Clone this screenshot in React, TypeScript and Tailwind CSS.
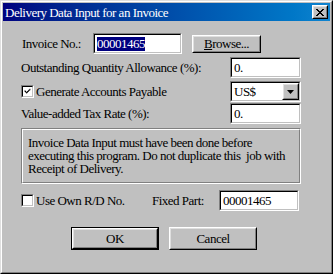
import React from "react";

const font = { fontFamily: '"Liberation Serif", "Times New Roman", serif' };

function Sunken({ className = "", children }: { className?: string; children?: React.ReactNode }) {
  return (
    <div className={`border border-t-[#808080] border-l-[#808080] border-b-white border-r-white ${className}`}>
      <div className="w-full h-full border border-t-black border-l-black border-b-[#c0c0c0] border-r-[#c0c0c0] bg-white flex items-center">
        {children}
      </div>
    </div>
  );
}

function Raised({ className = "", children }: { className?: string; children?: React.ReactNode }) {
  return (
    <div className={`border border-t-white border-l-white border-b-black border-r-black ${className}`}>
      <div className="w-full h-full border border-t-[#dfdfdf] border-l-[#dfdfdf] border-b-[#808080] border-r-[#808080] bg-[#c0c0c0] flex items-center justify-center">
        {children}
      </div>
    </div>
  );
}

function Check({ checked }: { checked?: boolean }) {
  return (
    <Sunken className="w-[13px] h-[13px] shrink-0">
      {checked && (
        <svg width="11" height="11" viewBox="0 0 11 11" className="block">
          <path d="M2 4h1v1h1v1h1V5h1V4h1V3h1V2h1v2H8v1H7v1H6v1H5v1H4V7H3V6H2z" fill="black" />
        </svg>
      )}
    </Sunken>
  );
}

export default function App() {
  return (
    <div className="w-[333px] h-[274px] text-[13px] tracking-[-0.5px] text-black" style={font}>
      <div className="w-full h-full border border-t-[#dfdfdf] border-l-[#dfdfdf] border-b-black border-r-black bg-[#c0c0c0]">
        <div className="w-full h-full border border-t-white border-l-white border-b-[#808080] border-r-[#808080] p-px flex flex-col">
          {/* Title bar */}
          <div className="h-[18px] shrink-0 bg-gradient-to-r from-[#000080] to-[#1084d0] flex items-center pl-[2px] pr-[2px]">
            <span className="text-white text-[13px] leading-none flex-1">Delivery Data Input for an Invoice</span>
            <Raised className="w-[16px] h-[14px]">
              <svg width="8" height="7" viewBox="0 0 8 7" className="block">
                <path d="M0 0h2v1h1v1h2V1h1V0h2v1H7v1H6v1H5v1h1v1h1v1h1v1H6V6H5V5H3v1H2v1H0V6h1V5h1V4h1V3H2V2H1V1H0z" fill="black" />
              </svg>
            </Raised>
          </div>

          {/* Content */}
          <div className="flex flex-col pl-[18px] w-[298px]">
            {/* Row 1 */}
            <div className="mt-[12px] h-[21px] flex items-center">
              <span className="w-[72px] pl-[1px]">Invoice No.:</span>
              <Sunken className="w-[89px] h-[21px]">
                <span className="ml-[2px] bg-[#000080] text-white leading-[14px] px-0">00001465</span>
              </Sunken>
              <Raised className="ml-[10px] w-[69px] h-[18px]">
                <span className="leading-none">
                  <span className="underline">B</span>rowse...
                </span>
              </Raised>
            </div>

            {/* Row 2 */}
            <div className="mt-[3px] h-[21px] flex items-center justify-between">
              <span>Outstanding Quantity Allowance (%):</span>
              <Sunken className="w-[71px] h-[21px]">
                <span className="ml-[2px]">0.</span>
              </Sunken>
            </div>

            {/* Row 3 */}
            <div className="mt-[3px] h-[21px] flex items-center justify-between">
              <div className="flex items-center">
                <Check checked />
                <span className="ml-[2px]">Generate Accounts Payable</span>
              </div>
              <Sunken className="w-[71px] h-[21px]">
                <span className="ml-[2px] flex-1">US$</span>
                <Raised className="w-[17px] h-[17px] mr-0">
                  <svg width="7" height="4" viewBox="0 0 7 4" className="block">
                    <path d="M0 0h7L3.5 4z" fill="black" />
                  </svg>
                </Raised>
              </Sunken>
            </div>

            {/* Row 4 */}
            <div className="mt-[1px] h-[21px] flex items-center justify-between">
              <span>Value-added Tax Rate (%):</span>
              <Sunken className="w-[71px] h-[21px]">
                <span className="ml-[2px]">0.</span>
              </Sunken>
            </div>

            {/* Info box */}
            <div className="mt-[4px] h-[56px] border border-t-[#808080] border-l-[#808080] border-b-white border-r-white">
              <div className="w-full h-full border border-t-white border-l-white border-b-[#808080] border-r-[#808080] pl-[5px] pt-[6px] leading-[13px]">
                <div>Invoice Data Input must have been done before</div>
                <div className="whitespace-pre">executing this program. Do not duplicate this  job with</div>
                <div>Receipt of Delivery.</div>
              </div>
            </div>

            {/* Row 6 */}
            <div className="mt-[6px] h-[21px] flex items-center">
              <Check />
              <span className="ml-[2px] w-[116px]">Use Own R/D No.</span>
              <span className="w-[67px]">Fixed Part:</span>
              <Sunken className="w-[80px] h-[21px]">
                <span className="ml-[2px]">00001465</span>
              </Sunken>
            </div>

            {/* Buttons */}
            <div className="mt-[16px] flex pl-[50px]">
              <div className="w-[88px] h-[23px] border border-black">
                <Raised className="w-full h-full">
                  <span>OK</span>
                </Raised>
              </div>
              <Raised className="ml-[10px] w-[88px] h-[23px]">
                <span>Cancel</span>
              </Raised>
            </div>
          </div>
        </div>
      </div>
    </div>
  );
}
